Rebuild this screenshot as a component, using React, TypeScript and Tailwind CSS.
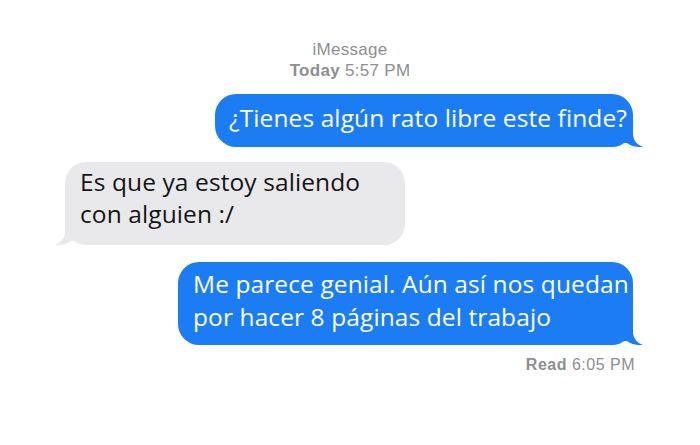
import React from 'react';

const BLUE = '#1b7cf4';
const GRAY = '#e9e9eb';

function Tail({ side, color }: { side: 'left' | 'right'; color: string }) {
  return (
    <svg
      width="20"
      height="22"
      viewBox="0 0 20 22"
      className={side === 'right' ? 'absolute bottom-0 right-[-10px]' : 'absolute bottom-0 left-[-10px] -scale-x-100'}
    >
      <path d="M0 0 L10 0 L10 9 C10 15 14 20 20 22 C14 22.6 8 21 4 18 L0 18 Z" fill={color} />
    </svg>
  );
}

export default function App() {
  return (
    <div className="w-[700px] h-[445px] bg-white flex flex-col font-['Open_Sans',sans-serif]">
      <div className="mt-[40px] text-center font-['Liberation_Sans',sans-serif] text-[17px] leading-[20px] tracking-[0.3px] text-[#8e8e93]">
        <div>iMessage</div>
        <div className="mt-[1px]">
          <span className="font-bold">Today</span> 5:57 PM
        </div>
      </div>

      <div
        className="relative self-end mr-[67px] mt-[13px] w-[418px] rounded-[21px] pl-[14px] pt-[8px] pb-[14px] text-[24.5px] tracking-[0.1px] leading-[31px] text-white whitespace-nowrap"
        style={{ backgroundColor: BLUE }}
      >
        ¿Tienes algún rato libre este finde?
        <Tail side="right" color={BLUE} />
      </div>

      <div
        className="relative self-start ml-[65px] mt-[15px] w-[340px] rounded-[21px] pl-[15px] pt-[4px] pb-[15px] text-[24.5px] tracking-[0.1px] leading-[32px] text-[#151515] whitespace-nowrap"
        style={{ backgroundColor: GRAY }}
      >
        Es que ya estoy saliendo
        <br />
        con alguien :/
        <Tail side="left" color={GRAY} />
      </div>

      <div
        className="relative self-end mr-[67px] mt-[17px] w-[455px] rounded-[21px] pl-[15px] pt-[5px] pb-[12px] text-[24.5px] tracking-[0.1px] leading-[33px] text-white whitespace-nowrap"
        style={{ backgroundColor: BLUE }}
      >
        Me parece genial. Aún así nos quedan
        <br />
        por hacer 8 páginas del trabajo
        <Tail side="right" color={BLUE} />
      </div>

      <div className="self-end mr-[65px] mt-[10px] font-['Liberation_Sans',sans-serif] text-[16px] leading-[20px] tracking-[0.5px] text-[#8e8e93]">
        <span className="font-bold">Read</span> 6:05 PM
      </div>
    </div>
  );
}
